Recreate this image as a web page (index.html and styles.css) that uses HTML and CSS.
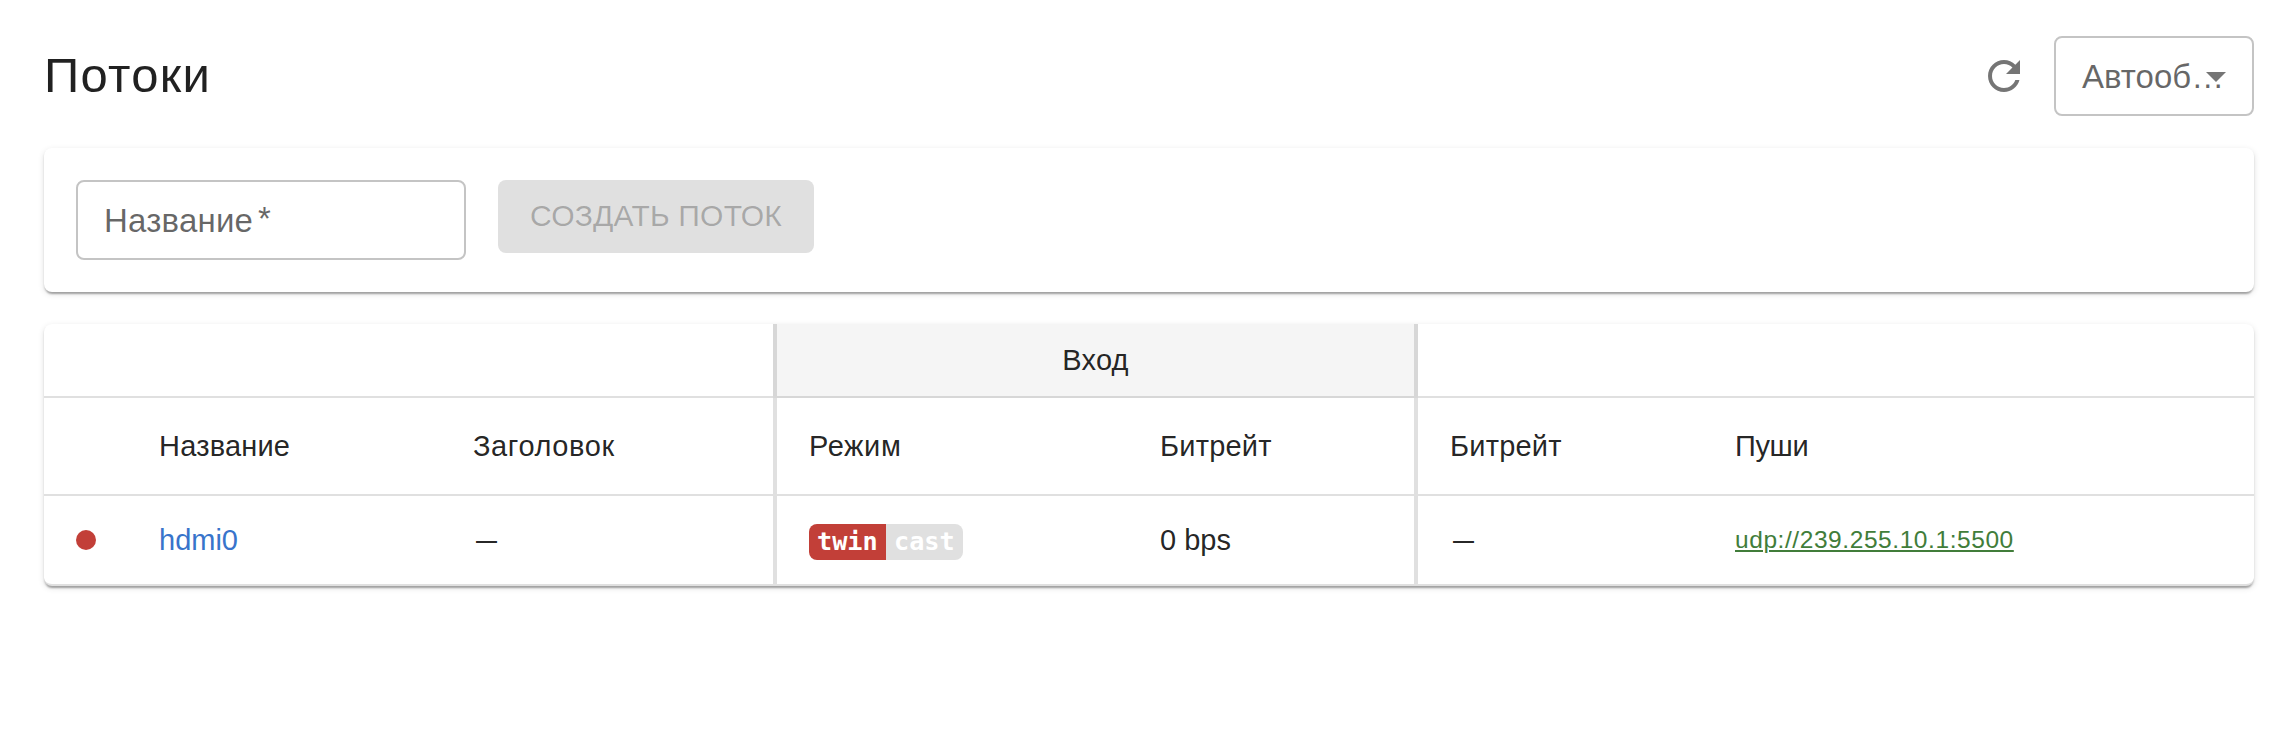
FILE: index.html
```html
<!DOCTYPE html>
<html lang="ru">
<head>
  <meta charset="UTF-8">
  <meta name="viewport" content="width=device-width, initial-scale=1.0">
  <title>Потоки</title>
  <link rel="stylesheet" href="styles.css">
</head>
<body>
  <main class="page">
    <!-- Заголовок и автообновление -->
    <header class="header">
      <h1 class="title">Потоки</h1>
      <button class="refresh-btn" type="button" aria-label="Обновить">
        <svg class="icon" viewBox="0 0 24 24"><path d="M17.65 6.35C16.2 4.9 14.21 4 12 4c-4.42 0-7.99 3.58-7.99 8s3.57 8 7.99 8c3.73 0 6.84-2.55 7.73-6h-2.08c-.82 2.33-3.04 4-5.65 4-3.31 0-6-2.69-6-6s2.69-6 6-6c1.66 0 3.14.69 4.22 1.78L13 11h7V4l-2.35 2.35z"/></svg>
      </button>
      <div class="select">
        <span class="select-label">Автооб…</span>
        <svg class="icon select-arrow" viewBox="0 0 24 24"><path d="M7 10l5 5 5-5z"/></svg>
      </div>
    </header>

    <!-- Форма создания потока -->
    <form class="paper create-form">
      <label class="field">Название<span class="asterisk">*</span></label>
      <button class="create-btn" type="submit" disabled>Создать поток</button>
    </form>

    <!-- Таблица потоков -->
    <div class="paper table-paper">
      <table class="streams">
        <colgroup>
          <col class="col-status">
          <col class="col-name">
          <col class="col-title">
          <col class="col-mode">
          <col class="col-in">
          <col class="col-out">
          <col class="col-push">
        </colgroup>
        <thead>
          <tr class="group-row">
            <th colspan="3"></th>
            <th colspan="2" class="group edge-left edge-right">Вход</th>
            <th colspan="2"></th>
          </tr>
          <tr class="head-row">
            <th></th>
            <th>Название</th>
            <th class="wide">Заголовок</th>
            <th class="wide edge-left">Режим</th>
            <th class="edge-right">Битрейт</th>
            <th>Битрейт</th>
            <th class="tight">Пуши</th>
          </tr>
        </thead>
        <tbody>
          <tr class="stream-row">
            <td><div class="status"></div></td>
            <td><a class="stream-link" href="#">hdmi0</a></td>
            <td><span class="dash">—</span></td>
            <td class="edge-left"><div class="badge"><span class="badge-on">twin</span><span class="badge-off">cast</span></div></td>
            <td class="edge-right">0 bps</td>
            <td><span class="dash">—</span></td>
            <td><a class="push-link" href="#">udp://239.255.10.1:5500</a></td>
          </tr>
        </tbody>
      </table>
    </div>
  </main>
</body>
</html>
```
FILE: styles.css
```css
* { margin: 0; padding: 0; box-sizing: border-box; }

body {
  background: #fff;
  color: rgba(0, 0, 0, 0.87);
  font-family: "Liberation Sans", Arial, sans-serif;
  font-size: 29px;
}

.page {
  display: flex;
  flex-direction: column;
  gap: 32px;
  padding: 36px 24px 32px 44px;
}

/* Шапка */
.header {
  display: flex;
  align-items: center;
  height: 80px;
}

.title {
  flex: 1;
  padding-bottom: 3px;
  font-size: 49px;
  font-weight: 400;
  letter-spacing: 1.3px;
  line-height: 64px;
}

.icon {
  display: block;
  width: 48px;
  height: 48px;
  fill: rgba(0, 0, 0, 0.54);
}

.refresh-btn {
  margin-right: 26px;
  border: none;
  background: none;
}

.select {
  position: relative;
  width: 200px;
  height: 80px;
  padding-left: 26px;
  border: 2px solid #c4c4c4;
  border-radius: 8px;
  color: rgba(0, 0, 0, 0.6);
  font-size: 33px;
  line-height: 77px;
  white-space: nowrap;
}

/* Стрелка лежит поверх обрезанной подписи */
.select-arrow {
  position: absolute;
  top: 14px;
  right: 12px;
}

/* Карточки */
.paper {
  border-radius: 8px;
  background: #fff;
  box-shadow: 0 4px 2px -2px rgba(0, 0, 0, 0.2),
              0 2px 2px 0 rgba(0, 0, 0, 0.14),
              0 2px 6px 0 rgba(0, 0, 0, 0.12);
}

/* Форма */
.create-form {
  display: flex;
  align-items: flex-start;
  gap: 32px;
  height: 144px;
  padding: 32px;
}

.field {
  width: 390px;
  height: 80px;
  padding-left: 26px;
  border: 2px solid #c4c4c4;
  border-radius: 8px;
  color: rgba(0, 0, 0, 0.6);
  font-size: 33px;
  letter-spacing: 0.2px;
  line-height: 78px;
}

.asterisk {
  margin-left: 5px;
  line-height: 1;
  vertical-align: 2px;
}

.create-btn {
  width: 316px;
  height: 73px;
  padding-bottom: 2px;
  border: none;
  border-radius: 8px;
  background: #e0e0e0;
  color: rgba(0, 0, 0, 0.26);
  font-family: inherit;
  font-size: 30px;
  letter-spacing: 0.2px;
  text-transform: uppercase;
  white-space: nowrap;
}

/* Таблица */
.table-paper {
  height: 262px;
  border-bottom: 2px solid #e0e0e0;
}

.streams {
  width: 100%;
  height: 260px;
  table-layout: fixed;
  border-collapse: separate;
  border-spacing: 0;
}

.col-status { width: 83px; }
.col-name { width: 314px; }
.col-title { width: 332px; }
.col-mode { width: 355px; }
.col-in { width: 290px; }
.col-out { width: 285px; }

.streams th,
.streams td {
  padding: 0 32px;
  font-weight: 400;
  text-align: left;
  white-space: nowrap;
}

.streams th {
  border-bottom: 2px solid rgba(0, 0, 0, 0.12);
  letter-spacing: 0.2px;
}

.streams .wide { letter-spacing: 0.6px; }
.streams .tight { letter-spacing: -0.4px; }

.group-row { height: 74px; }
.head-row { height: 98px; }
.stream-row { height: 88px; }

.streams .group {
  background: #f5f5f5;
  text-align: center;
}

.streams .edge-left { border-left: 4px solid rgba(0, 0, 0, 0.12); }
.streams .edge-right { border-right: 4px solid rgba(0, 0, 0, 0.12); }

.status {
  width: 20px;
  height: 20px;
  border-radius: 50%;
  background: #c23f38;
}

.stream-link {
  color: #3874cb;
  text-decoration: none;
}

.dash {
  margin-left: 3px;
  font-size: 21px;
  font-weight: 700;
  vertical-align: 3px;
}

.push-link {
  color: #417d3a;
  font-size: 24.5px;
  letter-spacing: 0.57px;
  text-decoration-thickness: 2px;
  text-underline-offset: 2px;
  vertical-align: 2px;
}

.badge {
  display: flex;
  width: 154px;
  height: 36px;
  margin-top: 4px;
  overflow: hidden;
  border-radius: 8px;
  color: #fff;
  font-family: "DejaVu Sans Mono", monospace;
  font-size: 25.2px;
  font-weight: 700;
  line-height: 36px;
}

.badge span {
  flex: 1;
  padding-left: 8px;
}

.badge-on { background: #c23f38; }
.badge-off { background: #e0e0e0; }
```
